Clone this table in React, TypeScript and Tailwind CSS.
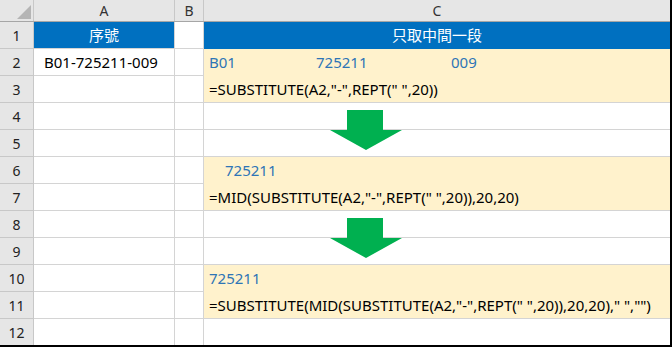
import React from 'react'

type Row = {
  n: number
  a?: React.ReactNode
  c?: React.ReactNode
  fill?: 'blue' | 'yellow'
  joinNext?: boolean
}

const blue = 'text-[#2e75b6]'

const rows: Row[] = [
  { n: 1, a: '序號', c: '只取中間一段', fill: 'blue' },
  {
    n: 2,
    a: 'B01-725211-009',
    fill: 'yellow',
    joinNext: true,
    c: (
      <span className={`flex ${blue}`}>
        <span className="w-[107px]">B01</span>
        <span className="w-[135px]">725211</span>
        <span>009</span>
      </span>
    ),
  },
  { n: 3, fill: 'yellow', c: '=SUBSTITUTE(A2,"-",REPT(" ",20))' },
  { n: 4 },
  { n: 5 },
  { n: 6, fill: 'yellow', joinNext: true, c: <span className={`pl-[16px] ${blue}`}>725211</span> },
  { n: 7, fill: 'yellow', c: '=MID(SUBSTITUTE(A2,"-",REPT(" ",20)),20,20)' },
  { n: 8 },
  { n: 9 },
  { n: 10, fill: 'yellow', joinNext: true, c: <span className={blue}>725211</span> },
  { n: 11, fill: 'yellow', c: '=SUBSTITUTE(MID(SUBSTITUTE(A2,"-",REPT(" ",20)),20,20)," ","")' },
  { n: 12 },
]

function Arrow({ top }: { top: number }) {
  return (
    <svg
      className="absolute left-[330px]"
      style={{ top }}
      width="72"
      height="40"
      viewBox="0 0 72 40"
    >
      <polygon points="17,0 53,0 53,20 72,20 36,40 0,20 17,20" fill="#00b050" />
    </svg>
  )
}

export default function App() {
  return (
    <div
      className="relative w-[672px] h-[347px] overflow-hidden bg-white border-r-2 border-b-2 border-black text-[15px] text-black"
      style={{ fontFamily: '"Noto Sans", "Noto Sans CJK TC", sans-serif' }}
    >
      {/* column headers */}
      <div className="flex h-[22px] bg-[#e6e6e6] border-b border-[#a6a6a6] text-[14px] text-[#333]">
        <div className="relative w-[34px] border-r border-[#c8c8c8]">
          <svg className="absolute left-[17px] top-[5px]" width="14" height="14" viewBox="0 0 14 14">
            <polygon points="14,0 14,14 0,14" fill="#b5b5b5" />
          </svg>
        </div>
        <div className="w-[141px] border-r border-[#c8c8c8] flex items-center justify-center">A</div>
        <div className="w-[29px] border-r border-[#c8c8c8] flex items-center justify-center">B</div>
        <div className="flex-1 flex items-center justify-center">C</div>
      </div>

      {rows.map((r) => {
        const cFill =
          r.fill === 'blue'
            ? 'bg-[#0070c0] text-white justify-center border-[#0070c0]'
            : r.fill === 'yellow'
              ? `bg-[#fff2cc] pl-[5px] ${r.joinNext ? 'border-[#fff2cc]' : 'border-[#d4d4d4]'}`
              : 'border-[#d4d4d4]'
        return (
          <div key={r.n} className="flex h-[27px]">
            <div className="w-[34px] bg-[#e6e6e6] border-r border-b border-[#c8c8c8] flex items-end justify-center pb-[2px] text-[14px] text-[#222]">
              {r.n}
            </div>
            <div
              className={`w-[141px] border-r border-b border-[#d4d4d4] flex items-center ${
                r.fill === 'blue' ? 'bg-[#0070c0] text-white justify-center' : 'pl-[10px]'
              }`}
            >
              {r.a}
            </div>
            <div className="w-[29px] border-r border-b border-[#d4d4d4]" />
            <div className={`flex-1 border-b flex items-center whitespace-pre ${cFill}`}>{r.c}</div>
          </div>
        )
      })}

      <Arrow top={110} />
      <Arrow top={218} />
    </div>
  )
}
